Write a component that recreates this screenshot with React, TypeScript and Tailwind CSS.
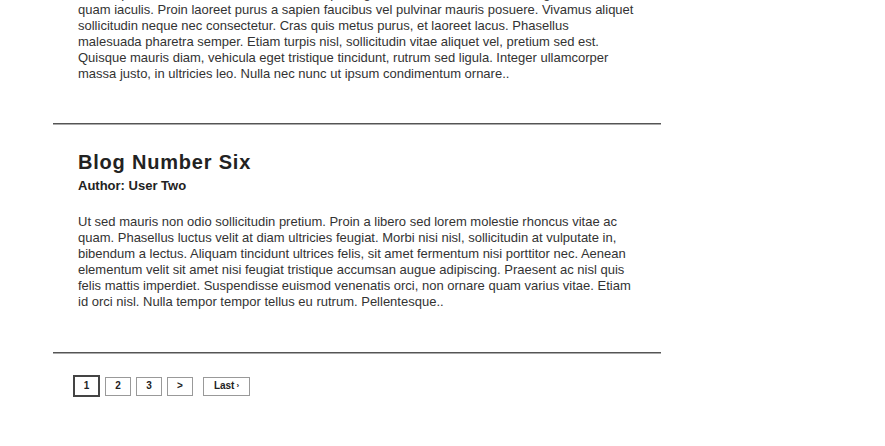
import React from "react";

type Post = {
  title?: string;
  author?: string;
  lead?: string;
  body: string;
};

const posts: Post[] = [
  {
    lead: "Lorem ipsum dolor sit amet, consectetur adipiscing elit. Aenean vel mi at nunc sagittis.",
    body:
      "quam iaculis. Proin laoreet purus a sapien faucibus vel pulvinar mauris posuere. Vivamus aliquet sollicitudin neque nec consectetur. Cras quis metus purus, et laoreet lacus. Phasellus malesuada pharetra semper. Etiam turpis nisl, sollicitudin vitae aliquet vel, pretium sed est. Quisque mauris diam, vehicula eget tristique tincidunt, rutrum sed ligula. Integer ullamcorper massa justo, in ultricies leo. Nulla nec nunc ut ipsum condimentum ornare..",
  },
  {
    title: "Blog Number Six",
    author: "Author: User Two",
    body:
      "Ut sed mauris non odio sollicitudin pretium. Proin a libero sed lorem molestie rhoncus vitae ac quam. Phasellus luctus velit at diam ultricies feugiat. Morbi nisi nisl, sollicitudin at vulputate in, bibendum a lectus. Aliquam tincidunt ultrices felis, sit amet fermentum nisi porttitor nec. Aenean elementum velit sit amet nisi feugiat tristique accumsan augue adipiscing. Praesent ac nisl quis felis mattis imperdiet. Suspendisse euismod venenatis orci, non ornare quam varius vitae. Etiam id orci nisl. Nulla tempor tempor tellus eu rutrum. Pellentesque..",
  },
];

const pages = ["1", "2", "3", ">"];

export default function App() {
  return (
    <div className="min-h-[446px] w-full overflow-hidden bg-white font-['Liberation_Sans',Arial,sans-serif] text-[#333]">
      <div className="ml-[53px] w-[608px]">
        {posts.map((post, i) => (
          <article key={i} className={i === 0 ? "-mt-[39px]" : ""}>
            <div className={`px-[25px] pt-[25px] ${i === 0 ? "pb-[41px]" : "pb-[42px]"}`}>
              {post.title && (
                <>
                  <h2 className="text-[20px] leading-[24px] font-bold tracking-[0.8px] text-[#222]">{post.title}</h2>
                  <h3 className="mt-[4px] text-[13px] leading-[16px] font-bold text-[#222]">{post.author}</h3>
                </>
              )}
              <p className={`w-[556px] text-[13px] leading-[16px] ${post.title ? "mt-[20px]" : ""}`}>
                {post.lead && (
                  <>
                    {post.lead}
                    <br />
                  </>
                )}
                {post.body}
              </p>
            </div>
            <div className="h-0 border-t border-b border-t-[#555] border-b-[#aaa]" />
          </article>
        ))}

        <nav className="flex items-center pl-[20px] pt-[21px] text-[10px] leading-none font-bold text-[#222]">
          {pages.map((p, i) => (
            <span
              key={p}
              className={
                i === 0
                  ? "mr-[5px] flex h-[22px] w-[27px] items-center justify-center border-2 border-[#444]"
                  : "mr-[5px] flex h-[19px] w-[26px] items-center justify-center border border-[#999]"
              }
            >
              {p}
            </span>
          ))}
          <span className="ml-[5px] flex h-[19px] w-[47px] items-center justify-center border border-[#999]">
            Last <span className="ml-[2px] text-[8px]">›</span>
          </span>
        </nav>
      </div>
    </div>
  );
}
